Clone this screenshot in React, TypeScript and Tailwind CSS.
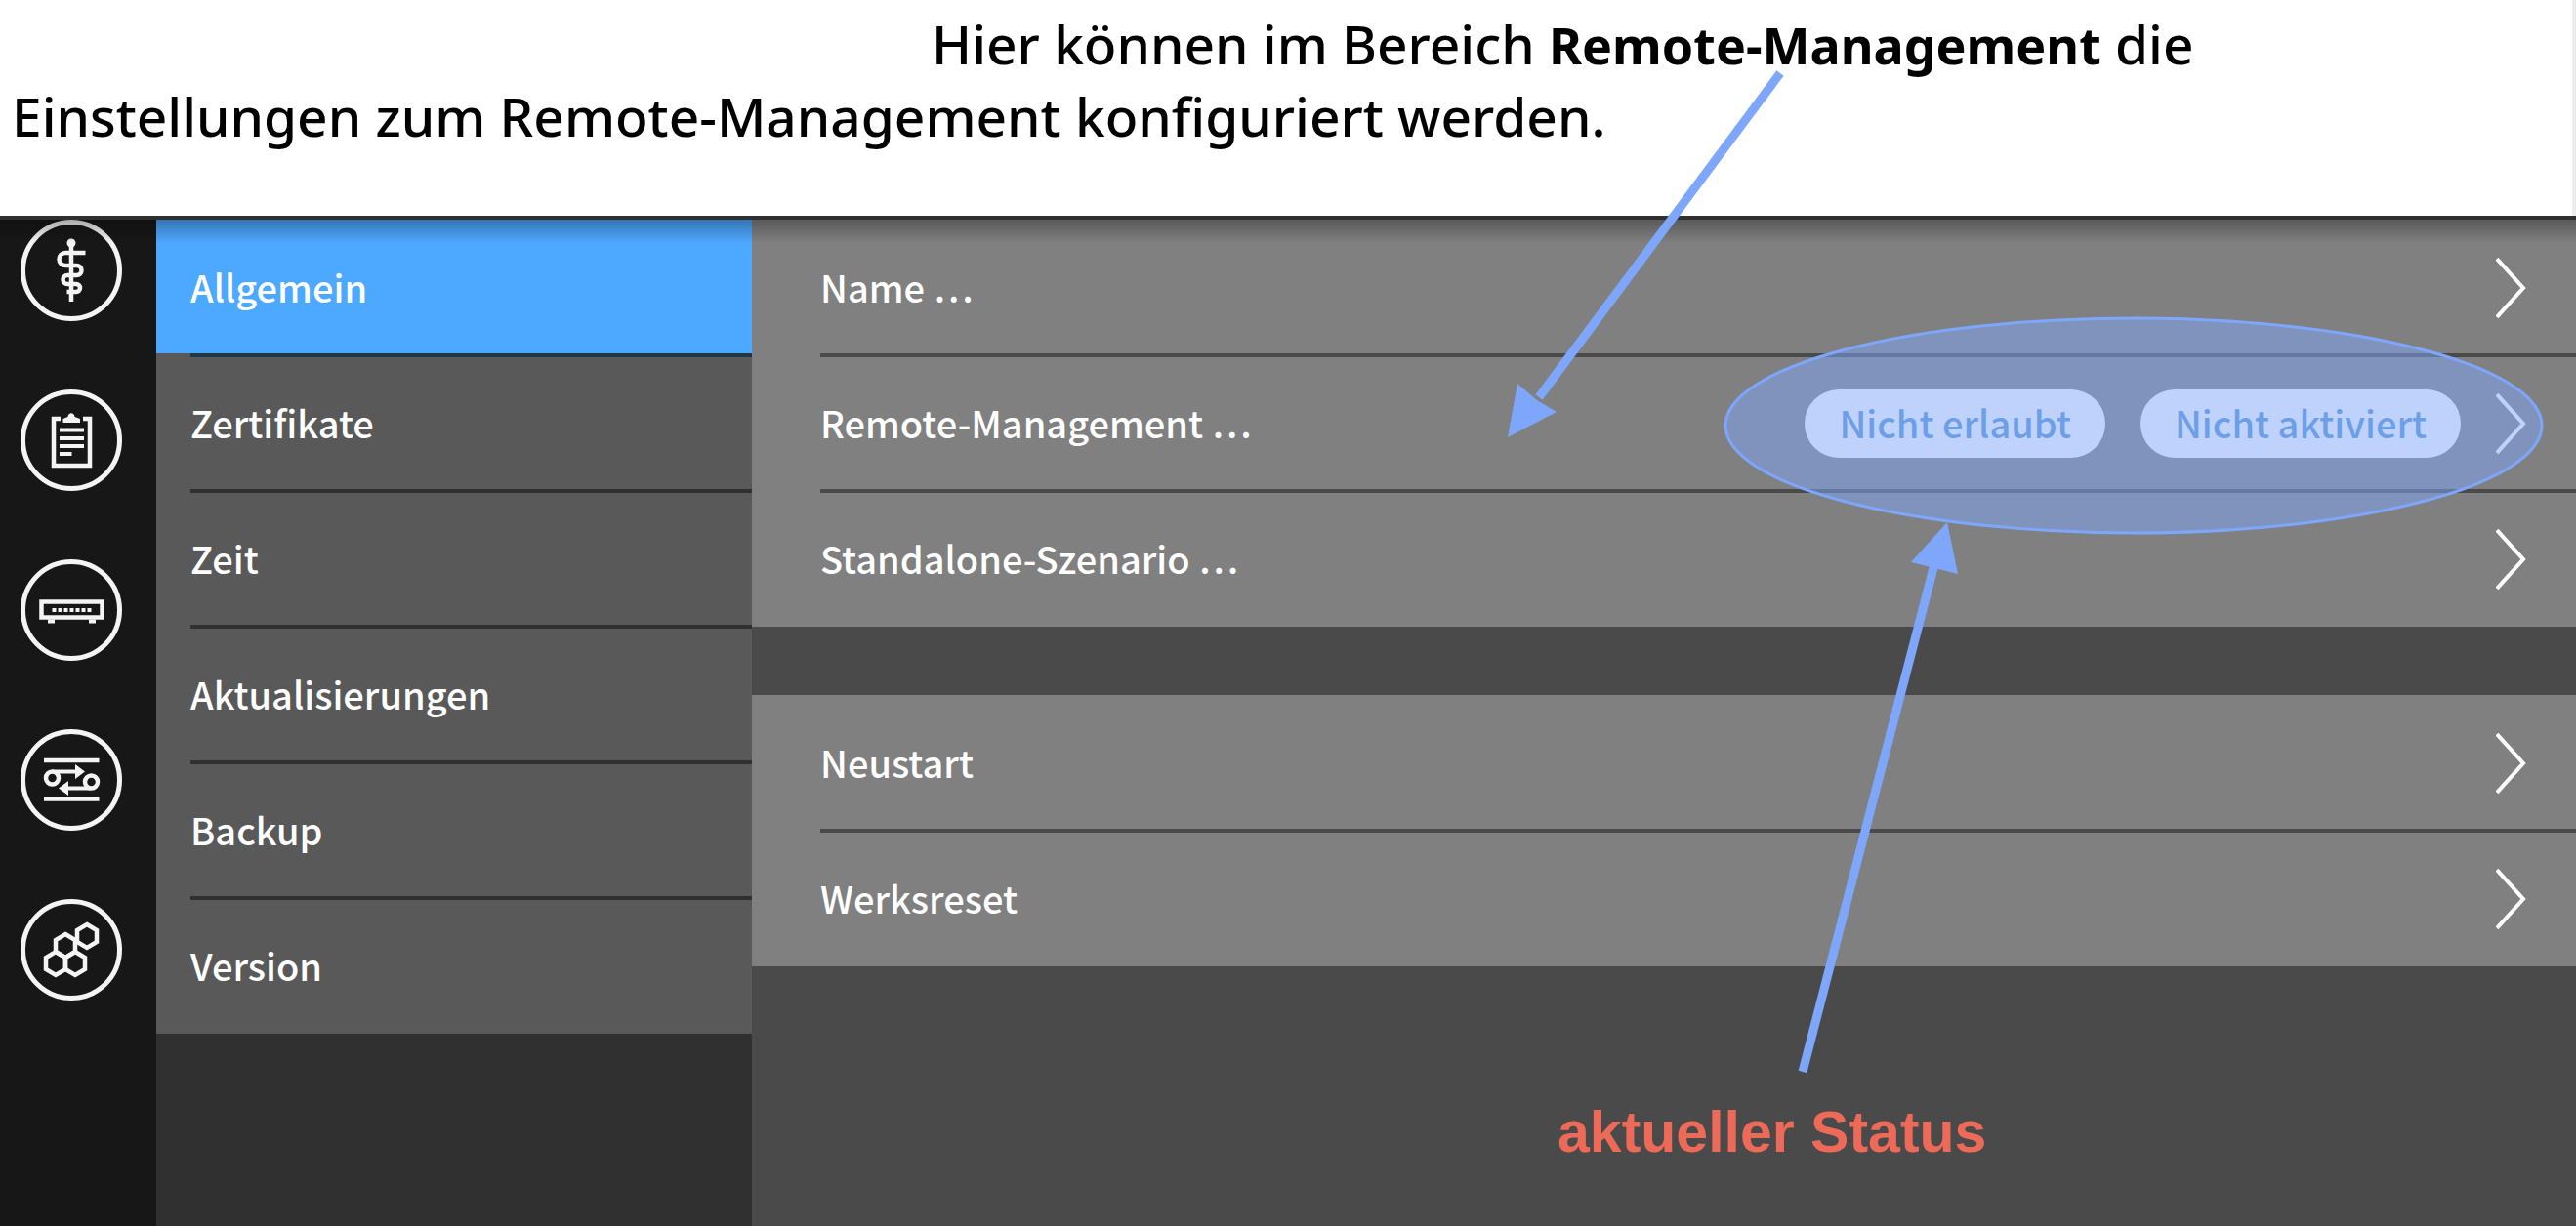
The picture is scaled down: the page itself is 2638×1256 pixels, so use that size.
import type { ReactNode } from "react";

const hexagon = (cx: number, cy: number) =>
  [
    [0, -12],
    [10, -6],
    [10, 6],
    [0, 12],
    [-10, 6],
    [-10, -6],
  ]
    .map(([x, y]) => `${cx + x},${cy + y}`)
    .join(" ");

const navItems: { label: string; icon: ReactNode }[] = [
  {
    label: "Medizin",
    icon: (
      <>
        <path d="M52 24V84" />
        <circle cx="52" cy="24" r="3" fill="currentColor" strokeWidth="3" />
        <path d="M66.500 34H46a6.500 6.500 0 0 0 0 13H57.500a5 5 0 0 1 0 10H48a4.500 4.500 0 0 0 0 9H57a4 4 0 0 1 0 8H47.500" />
      </>
    ),
  },
  {
    label: "Protokolle",
    icon: (
      <>
        <path d="M41 30H34V78H71V30H64" />
        <path d="M43.500 34V30L48.500 28C49 23 55 23 55.500 28L61 30V34Z" fill="currentColor" stroke="none" />
        <path d="M40 41.500H65M40 50H65M40 58H65M40 66H52.500" strokeWidth="4" />
      </>
    ),
  },
  {
    label: "Konnektor",
    icon: (
      <>
        <rect x="21.500" y="43.500" width="62" height="16" />
        <path d="M28 63.500H35M70 63.500H77" strokeWidth="4" />
        <path d="M32.500 52H73" strokeWidth="4" strokeDasharray="4 2" />
      </>
    ),
  },
  {
    label: "Netzwerk",
    icon: (
      <>
        <path d="M24 32H80.500M24 71.500H80.500" />
        <circle cx="32.500" cy="50" r="6.500" />
        <circle cx="72.500" cy="54" r="6.500" />
        <path d="M32.500 43.500H58M72 60.500H47" strokeWidth="4" />
        <path d="M56 36L66 43.500L56 51ZM49 53L39 60.500L49 68Z" fill="currentColor" stroke="none" />
      </>
    ),
  },
  {
    label: "System",
    icon: (
      <>
        <polygon points={hexagon(68, 38)} />
        <polygon points={hexagon(46, 48)} />
        <polygon points={hexagon(36, 66)} />
        <polygon points={hexagon(56, 66)} />
      </>
    ),
  },
];

const menu = ["Allgemein", "Zertifikate", "Zeit", "Aktualisierungen", "Backup", "Version"];

function Divider({ className }: { className: string }) {
  return <hr className={`relative -my-0.5 h-1 border-0 ${className}`} />;
}

function Row({ label, badges = [] }: { label: string; badges?: string[] }) {
  return (
    <button type="button" className="flex h-[139px] w-full items-center gap-9 pr-[50px] pl-[70px] text-left">
      <span className="grow pb-0.5">{label}</span>
      {badges.map((badge) => (
        <span key={badge} className="flex h-[70px] items-center rounded-full bg-white px-[35px] pb-0.5 text-[#5a98d0]">
          {badge}
        </span>
      ))}
      <svg className="h-16 w-8 shrink-0" viewBox="0 0 32 64" fill="none" stroke="white" strokeWidth="4" aria-hidden="true">
        <path d="M1 2L28 32L1 62" />
      </svg>
    </button>
  );
}

export default function App() {
  return (
    <div className="relative flex min-h-screen flex-col overflow-hidden bg-white">
      <header className="h-[221px] border-r-4 border-[#ececec] pt-2 pl-3 font-['Noto_Sans','Open_Sans',sans-serif] text-[55px] leading-[73px] font-medium text-black">
        <p>
          <span className="ml-[942px]">
            Hier können im Bereich <strong className="text-[52px] font-bold">Remote-Management</strong> die
          </span>
          <br />
          Einstellungen zum Remote-Management konfiguriert werden.
        </p>
      </header>

      <div className="relative flex grow border-t-4 border-[#303030] font-['Noto_Sans_CJK_SC','Noto_Sans',sans-serif] text-[38px] leading-[60px] font-medium text-white">
        <nav aria-label="Hauptnavigation" className="flex w-40 shrink-0 flex-col gap-[70px] bg-[#171717] pl-[21px]">
          {navItems.map(({ label, icon }) => (
            <button key={label} type="button" aria-label={label} className="size-[104px] rounded-full text-[#f4f4f4]">
              <svg viewBox="0 0 104 104" fill="none" stroke="currentColor" strokeWidth="4.500" aria-hidden="true">
                <circle cx="52" cy="52" r="49.500" strokeWidth="5" />
                {icon}
              </svg>
            </button>
          ))}
        </nav>

        <nav aria-label="Einstellungen" className="w-[610px] shrink-0 bg-[#303030]">
          {menu.map((label, i) => (
            <div key={label} className={i === 0 ? "bg-[#4da8ff]" : "bg-[#595959]"}>
              {i > 0 && <Divider className={i === 1 ? "ml-[35px] bg-[#203747]" : "ml-[35px] bg-[#303030]"} />}
              <button type="button" className="flex h-[139px] w-full items-center pb-0.5 pl-[35px] text-left">
                {label}
              </button>
            </div>
          ))}
        </nav>

        <main className="grow bg-[#4a4a4a]">
          <section className="bg-[#808080]">
            <Row label="Name …" />
            <Divider className="ml-[70px] bg-[#4a4a4a]" />
            <Row label="Remote-Management …" badges={["Nicht erlaubt", "Nicht aktiviert"]} />
            <Divider className="ml-[70px] bg-[#4a4a4a]" />
            <Row label="Standalone-Szenario …" />
          </section>
          <section className="mt-[70px] bg-[#808080]">
            <Row label="Neustart" />
            <Divider className="ml-[70px] bg-[#4a4a4a]" />
            <Row label="Werksreset" />
          </section>
          <p className="mt-[136px] ml-[825px] font-['Liberation_Sans',Arial,sans-serif] text-[59px] leading-[68px] font-bold text-[#ed6a58]">
            aktueller Status
          </p>
        </main>

        <div className="pointer-events-none absolute inset-x-0 top-0 h-6 bg-linear-to-b from-black/30 to-transparent" />
      </div>

      <svg
        className="pointer-events-none absolute inset-0 h-full w-full text-[#7ea6fa]"
        viewBox="0 0 2638 1256"
        preserveAspectRatio="none"
        fill="none"
        stroke="currentColor"
        aria-hidden="true"
      >
        <ellipse cx="2185" cy="436" rx="418" ry="110" fill="currentColor" fillOpacity="0.5" strokeWidth="3" />
        <path d="M1823 75L1576 407" strokeWidth="9" />
        <path d="M1544 448L1554 393L1574 410L1594 422Z" fill="currentColor" stroke="none" />
        <path d="M1846 1098L1981 578" strokeWidth="9" />
        <path d="M1994 535L1957 576L2005 588Z" fill="currentColor" stroke="none" />
      </svg>
    </div>
  );
}
